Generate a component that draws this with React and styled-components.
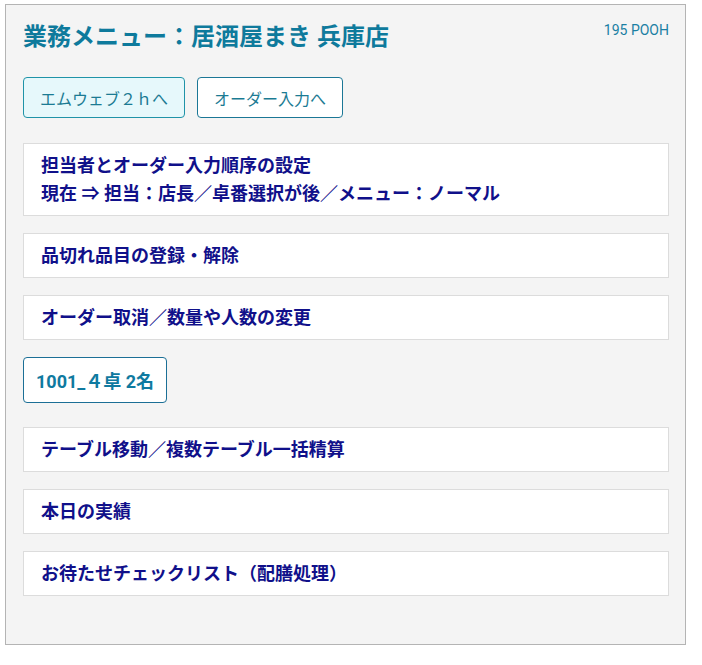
import styled, { createGlobalStyle } from "styled-components";

const GlobalStyle = createGlobalStyle`
  body {
    margin: 0;
    background: #fff;
    font-family: Roboto, "Noto Sans CJK JP", sans-serif;
  }
`;

const menuItems = [
  ["担当者とオーダー入力順序の設定", "現在 ⇒ 担当：店長／卓番選択が後／メニュー：ノーマル"],
  ["品切れ品目の登録・解除"],
  ["オーダー取消／数量や人数の変更"],
];

const moreItems = [
  ["テーブル移動／複数テーブル一括精算"],
  ["本日の実績"],
  ["お待たせチェックリスト（配膳処理）"],
];

const App = () => {
  return (
    <>
      <GlobalStyle />
      <Panel>
        <Header>
          <Title>業務メニュー：居酒屋まき 兵庫店</Title>
          <User>195 POOH</User>
        </Header>

        <ButtonRow>
          <NavButton $active>エムウェブ２ｈへ</NavButton>
          <NavButton>オーダー入力へ</NavButton>
        </ButtonRow>

        {menuItems.map((lines) => (
          <Card key={lines[0]}>
            {lines.map((l) => (
              <div key={l}>{l}</div>
            ))}
          </Card>
        ))}

        <TableButton>1001_４卓 2名</TableButton>

        {moreItems.map((lines) => (
          <Card key={lines[0]}>
            {lines.map((l) => (
              <div key={l}>{l}</div>
            ))}
          </Card>
        ))}
      </Panel>
    </>
  );
};

export default App;

const Panel = styled.div`
  box-sizing: border-box;
  width: 681px;
  height: 641px;
  margin: 4px 0 0 5px;
  padding: 15px 16px 0 17px;
  background: #f4f4f4;
  border: 1px solid #b4b4b4;
`;

const Header = styled.div`
  display: flex;
  justify-content: space-between;
  align-items: flex-start;
`;

const Title = styled.h1`
  margin: 0;
  font-size: 24px;
  line-height: 34px;
  font-weight: 700;
  color: #0e7a9c;
  font-family: Roboto, "Noto Sans CJK JP", sans-serif;
`;

const User = styled.div`
  font-size: 14px;
  line-height: 20px;
  margin-top: 0;
  color: #1a7fa3;
`;

const ButtonRow = styled.div`
  display: flex;
  gap: 12px;
  margin: 23px 0 25px 0;
`;

const NavButton = styled.button`
  box-sizing: border-box;
  height: 41px;
  padding: 0 16px;
  border: 1px solid ${(p) => (p.$active ? "#1f93a8" : "#1b7796")};
  border-radius: 4px;
  background: ${(p) => (p.$active ? "#e6f8fb" : "#ffffff")};
  color: #1b7b93;
  font-size: 16px;
  font-family: Roboto, "Noto Sans CJK JP", sans-serif;
  cursor: pointer;
`;

const Card = styled.div`
  box-sizing: border-box;
  background: #fff;
  border: 1px solid #dcdcdc;
  padding: 7.5px 17px;
  margin-bottom: 17px;
  font-size: 18px;
  line-height: 28px;
  font-weight: 700;
  color: #10108a;
`;

const TableButton = styled.button`
  display: block;
  box-sizing: border-box;
  height: 46px;
  padding: 0 12px;
  margin-bottom: 24px;
  border: 1px solid #1b6f96;
  border-radius: 4px;
  background: #fff;
  color: #0f7aa0;
  font-size: 18px;
  font-weight: 700;
  font-family: Roboto, "Noto Sans CJK JP", sans-serif;
  cursor: pointer;
`;
